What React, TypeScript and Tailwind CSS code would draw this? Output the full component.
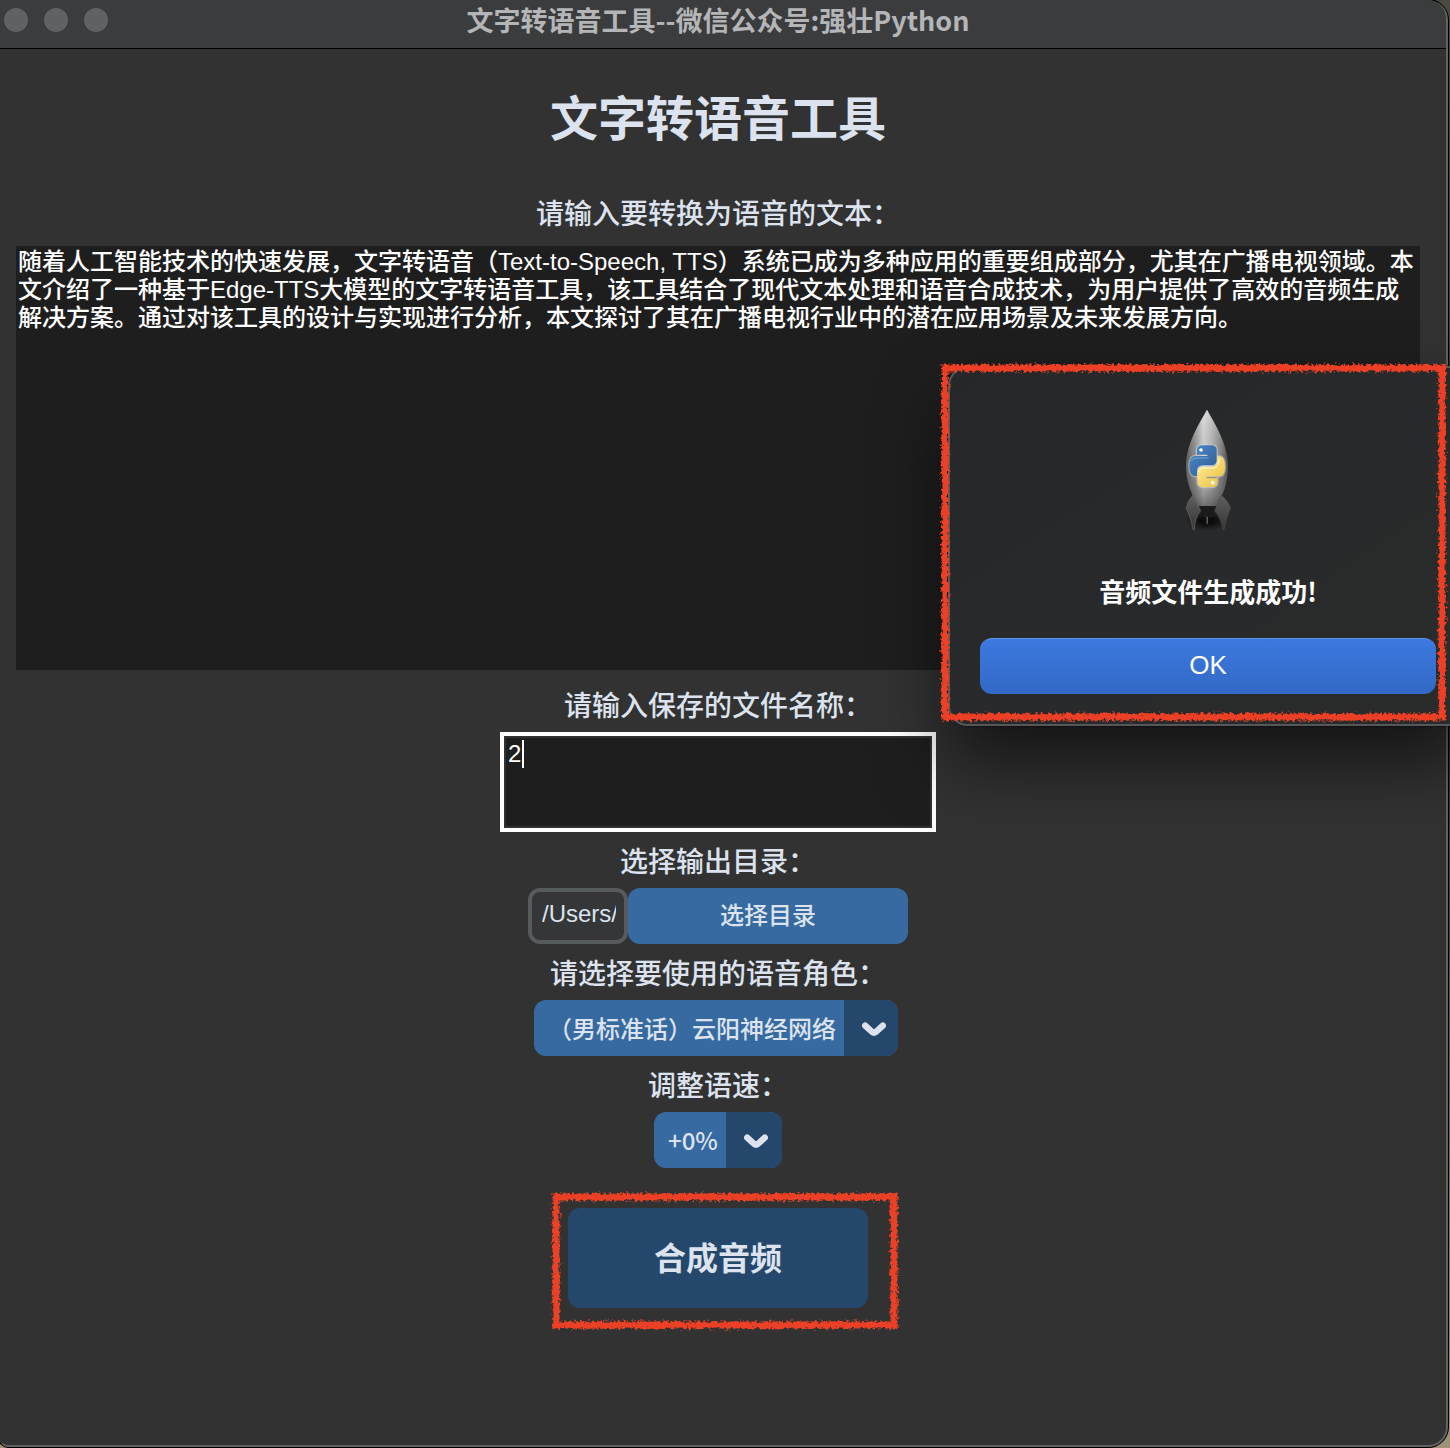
import { useState, type ReactNode } from "react";

const DEFAULT_TEXT =
  "随着人工智能技术的快速发展，文字转语音（Text-to-Speech, TTS）系统已成为多种应用的重要组成部分，尤其在广播电视领域。本文介绍了一种基于Edge-TTS大模型的文字转语音工具，该工具结合了现代文本处理和语音合成技术，为用户提供了高效的音频生成解决方案。通过对该工具的设计与实现进行分析，本文探讨了其在广播电视行业中的潜在应用场景及未来发展方向。";

function Label({ htmlFor, children }: { htmlFor: string; children: ReactNode }) {
  return (
    <label htmlFor={htmlFor} className="flex h-14 items-center pt-1.5 text-[28px] leading-10">
      {children}
    </label>
  );
}

function Chevron() {
  return (
    <svg viewBox="0 0 24 16" className="h-4 w-6" fill="none">
      <path
        d="M3.2 4.6 L10.2 11 Q12 12.4 13.8 11 L20.8 4.6"
        stroke="#dce3ee"
        strokeWidth="6.4"
        strokeLinecap="round"
        strokeLinejoin="round"
      />
    </svg>
  );
}

// Rough crayon outline
function Crayon({ id }: { id: string }) {
  return (
    <svg className="h-full w-full overflow-visible" aria-hidden="true">
      <defs>
        <filter id={id} filterUnits="userSpaceOnUse" x="-10" y="-10" width="800" height="600">
          <feTurbulence type="fractalNoise" baseFrequency="0.35" numOctaves="3" seed="4" result="n" />
          <feDisplacementMap in="SourceGraphic" in2="n" scale="7" xChannelSelector="R" yChannelSelector="G" />
        </filter>
      </defs>
      <rect
        x="4"
        y="4"
        className="h-[calc(100%-8px)] w-[calc(100%-8px)]"
        fill="none"
        stroke="#ec4127"
        strokeWidth="7"
        filter={`url(#${id})`}
      />
    </svg>
  );
}

function Rocket() {
  const snake =
    "M141 180 V166 Q141 152 157 152 H184 Q200 152 200 167 V196 Q200 212 184 212 H160 Q141 212 141 230 V244 H133 Q118 241 118 213 Q118 184 137 184 H172 V180 Z";
  return (
    <svg viewBox="96 40 150 375" className="mr-0.5 h-[125px] w-[50px]" aria-hidden="true">
      <defs>
        <linearGradient id="hull" x1="0" x2="1">
          <stop offset="0" stopColor="#5c5c5c" />
          <stop offset="0.2" stopColor="#8b8b8b" />
          <stop offset="0.42" stopColor="#cfcfcf" />
          <stop offset="0.62" stopColor="#b0b0b0" />
          <stop offset="0.85" stopColor="#7c7c7c" />
          <stop offset="1" stopColor="#4c4c4c" />
        </linearGradient>
        <linearGradient id="shade" x1="0" x2="0" y1="0" y2="1">
          <stop offset="0" stopColor="#fff" stopOpacity="0.35" />
          <stop offset="0.5" stopColor="#999" stopOpacity="0" />
          <stop offset="1" stopColor="#222" stopOpacity="0.55" />
        </linearGradient>
        <linearGradient id="fin" x1="0" x2="0" y1="0" y2="1">
          <stop offset="0" stopColor="#5f5f5f" />
          <stop offset="1" stopColor="#353535" />
        </linearGradient>
        <linearGradient id="blue" x1="0" x2="1" y1="0" y2="1">
          <stop offset="0" stopColor="#4d8ccb" />
          <stop offset="1" stopColor="#2c5a92" />
        </linearGradient>
        <linearGradient id="yellow" x1="1" x2="0" y1="1" y2="0">
          <stop offset="0" stopColor="#fff0a0" />
          <stop offset="1" stopColor="#e8bd35" />
        </linearGradient>
        <radialGradient id="soot">
          <stop offset="0.3" stopColor="#0c0c0c" />
          <stop offset="1" stopColor="#0c0c0c" stopOpacity="0" />
        </radialGradient>
      </defs>
      <ellipse cx="172" cy="378" rx="66" ry="30" fill="url(#soot)" />
      <path
        d="M171 45 C150 84 108 145 108 215 C108 270 130 305 146 336 H200 C216 305 234 270 234 215 C234 145 192 84 171 45 Z"
        fill="url(#hull)"
      />
      <path
        d="M171 45 C150 84 108 145 108 215 C108 270 130 305 146 336 H200 C216 305 234 270 234 215 C234 145 192 84 171 45 Z"
        fill="url(#shade)"
      />
      <path d="M146 334 H200 L190 366 Q172 372 157 366 Z" fill="#1b1b1b" />
      <path d="M128 302 Q112 322 108 340 Q122 366 129 405 H133 Q134 368 152 348 Z" fill="url(#fin)" stroke="#666" strokeWidth="2" />
      <path d="M215 302 Q236 322 242 340 Q230 366 222 405 H219 Q213 368 194 348 Z" fill="url(#fin)" stroke="#4c4c4c" strokeWidth="2" />
      <path d="M169 366 V386 Q171.500 391 174 386 V366 Z" fill="#5a5a5a" />
      <g stroke="#e5e5e5" strokeOpacity="0.45" strokeWidth="7" fill="none">
        <path d={snake} />
        <path d={snake} transform="rotate(180 171.5 214.5)" />
      </g>
      <path d={snake} fill="url(#blue)" />
      <path d={snake} fill="url(#yellow)" transform="rotate(180 171.5 214.5)" />
      <circle cx="153" cy="166" r="5.5" fill="#fff" />
      <circle cx="188" cy="264" r="5.5" fill="#fff" />
      <path d="M123 200 Q128 190 140 190 H175" stroke="#9cc3e8" strokeOpacity="0.6" strokeWidth="3" fill="none" />
      <path d="M147 232 Q150 220 164 220 H190 Q207 216 208 192" stroke="#fff6c0" strokeOpacity="0.8" strokeWidth="4" fill="none" />
      <path d="M170 249 H200" stroke="#8a8a7a" strokeWidth="3" />
    </svg>
  );
}

export default function App() {
  const [text, setText] = useState(DEFAULT_TEXT);
  const [fileName, setFileName] = useState("2");
  const [outputDir, setOutputDir] = useState("/Users/");

  return (
    <div className="relative flex min-h-screen flex-col overflow-hidden bg-linear-to-b from-[#4b4a42] via-[#252a2c] to-[#a09278] pr-0.5 pb-px font-['Liberation_Sans','Noto_Sans_CJK_SC',sans-serif] font-medium text-[#dce3ee]">
      <div className="flex grow flex-col overflow-hidden rounded-r-[20px] rounded-bl-lg border-r-2 border-b-2 border-[#626262] bg-[#323232] shadow-[0_0_0_1px_#000]">
        <header className="relative flex h-[49px] items-start justify-center border-b border-black bg-[#3b3c3e]">
          <div className="absolute top-2 left-1 flex gap-4">
            <button aria-label="关闭" className="size-6 rounded-full bg-[#606163]" />
            <button aria-label="最小化" className="size-6 rounded-full bg-[#606163]" />
            <button aria-label="缩放" className="size-6 rounded-full bg-[#606163]" />
          </div>
          <p className="pr-2.5 font-['Noto_Sans_CJK_SC',sans-serif] text-[27px] leading-10 font-bold text-[#b4b5b6]">
            文字转语音工具--微信公众号:强壮Python
          </p>
        </header>

        <main className="flex flex-col items-center pr-[26px] pl-4">
          <h1 className="flex h-[135px] items-center pt-1.5 text-5xl font-bold">文字转语音工具</h1>

          <Label htmlFor="text">请输入要转换为语音的文本：</Label>
          <textarea
            id="text"
            value={text}
            onChange={(e) => setText(e.target.value)}
            className="my-1.5 h-[424px] w-full resize-none bg-[#1e1e1e] px-0.5 py-0.5 text-2xl leading-7 text-white outline-none"
          />

          <Label htmlFor="file-name">请输入保存的文件名称：</Label>
          <div className="relative h-[100px] w-[436px]">
            <textarea
              id="file-name"
              value={fileName}
              onChange={(e) => setFileName(e.target.value)}
              className="h-full w-full resize-none border-4 border-white bg-[#1e1e1e] p-1 text-2xl leading-7 text-white caret-transparent inset-ring-2 inset-ring-[#323232] outline-none"
            />
            <span className="absolute top-2 left-[22px] h-7 w-0.5 bg-white" />
          </div>

          <Label htmlFor="output-dir">选择输出目录：</Label>
          <div className="flex h-14">
            <input
              id="output-dir"
              value={outputDir}
              onChange={(e) => setOutputDir(e.target.value)}
              className="w-[100px] rounded-xl border-4 border-[#565b5e] bg-[#343638] pr-2 pb-1 pl-2.5 text-2xl outline-none"
            />
            <button className="w-[280px] rounded-xl bg-[#366aa0] text-2xl">选择目录</button>
          </div>

          <Label htmlFor="voice">请选择要使用的语音角色：</Label>
          <div className="relative mr-1 h-14 w-[364px] overflow-hidden rounded-xl">
            <select id="voice" className="h-full w-full appearance-none bg-[#366aa0] pt-1 pl-3.5 text-2xl outline-none">
              <option>（男标准话）云阳神经网络</option>
            </select>
            <span className="pointer-events-none absolute inset-y-0 right-0 flex w-[54px] items-center justify-end bg-[#25476b] pt-0.5 pr-3">
              <Chevron />
            </span>
          </div>

          <Label htmlFor="rate">调整语速：</Label>
          <div className="relative h-14 w-32 overflow-hidden rounded-xl">
            <select
              id="rate"
              className="h-full w-full appearance-none bg-[#366aa0] pl-3.5 font-['Noto_Sans_CJK_SC',sans-serif] text-2xl outline-none"
            >
              <option>+0%</option>
            </select>
            <span className="pointer-events-none absolute inset-y-0 right-0 flex w-14 items-center justify-end bg-[#25476b] pt-0.5 pr-3.5">
              <Chevron />
            </span>
          </div>

          <div className="relative mt-10 mb-32">
            <button className="h-[100px] w-[300px] rounded-xl bg-[#25476b] pt-0.5 text-[32px] font-bold">合成音频</button>
            <div className="pointer-events-none absolute -top-[15px] -right-[30px] -bottom-[21px] -left-4">
              <Crayon id="crayon-submit" />
            </div>
          </div>
        </main>
      </div>

      <div
        role="dialog"
        aria-labelledby="dialog-message"
        className="absolute top-[366px] -right-[18px] flex w-[520px] flex-col items-center rounded-[20px] border-2 border-[#55585a] bg-linear-to-br from-[#262729] to-[#2a2c2c] px-[30px] pt-10 pb-[30px] shadow-[0_0_2px_#000,0_36px_70px_rgba(0,0,0,0.6)]"
      >
        <Rocket />
        <p
          id="dialog-message"
          className="mt-[38px] font-['Noto_Sans_CJK_SC',sans-serif] text-[26px] leading-10 font-bold text-white"
        >
          音频文件生成成功!
        </p>
        <button className="mt-[27px] h-14 w-full rounded-xl border-t border-[#5f93e6] bg-linear-to-b from-[#3c79df] to-[#3269c6] pb-0.5 text-[26px] text-white">
          OK
        </button>
        <div className="pointer-events-none absolute -top-1 right-5 bottom-[3px] -left-[9px]">
          <Crayon id="crayon-dialog" />
        </div>
      </div>
    </div>
  );
}
